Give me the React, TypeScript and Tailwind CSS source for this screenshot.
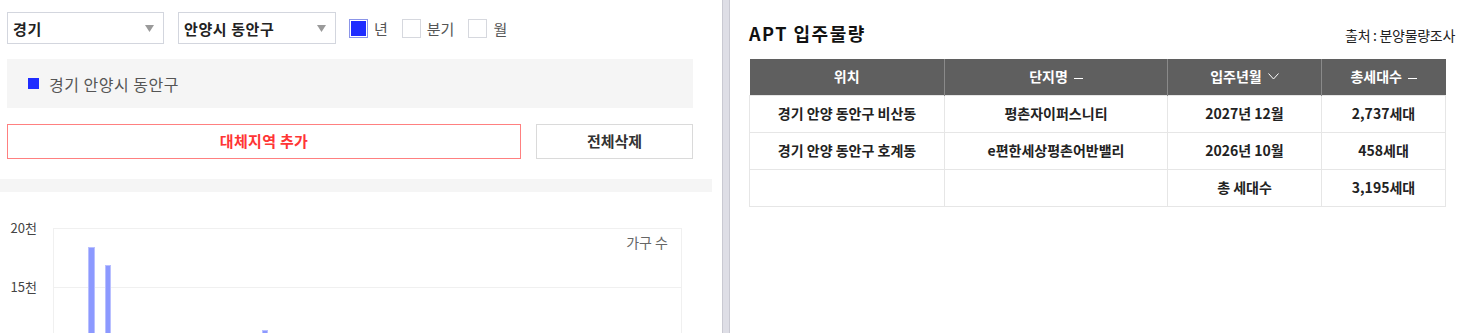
import React from "react";

const rows = [
  { loc: "경기 안양 동안구 비산동", name: "평촌자이퍼스니티", date: "2027년 12월", count: "2,737세대" },
  { loc: "경기 안양 동안구 호계동", name: "e편한세상평촌어반밸리", date: "2026년 10월", count: "458세대" },
];

function Select({ label, width }: { label: string; width: string }) {
  return (
    <div className={`${width} h-[32px] border border-[#d3d6de] flex items-center justify-between pl-[5px] pr-[9px]`}>
      <span className="text-[15px] font-bold text-[#222] leading-none tracking-[0.6px]">{label}</span>
      <svg width="9" height="7" viewBox="0 0 9 7">
        <path d="M0 0 L9 0 L4.5 7 Z" fill="#9a9a9a" />
      </svg>
    </div>
  );
}

function Check({ label, checked }: { label: string; checked?: boolean }) {
  return (
    <div className="flex items-center gap-[6px]">
      <div
        className={`w-[19px] h-[19px] border flex items-center justify-center bg-white ${
          checked ? "border-[#8b95e8]" : "border-[#d6d8de]"
        }`}
      >
        {checked && <div className="w-[15px] h-[15px] bg-[#1e2cff]" />}
      </div>
      <span className="text-[15px] text-[#555] leading-none">{label}</span>
    </div>
  );
}

function Dash() {
  return <span className="inline-block w-[9px] h-[1.5px] bg-white ml-[6px] align-middle" />;
}

function Chart() {
  return (
    <svg width="712" height="141" viewBox="0 192 712 141" className="block">
      <line x1="53" y1="228.5" x2="681" y2="228.5" stroke="#f0f0f0" />
      <line x1="53" y1="287.5" x2="681" y2="287.5" stroke="#f0f0f0" />
      <line x1="53.5" y1="228" x2="53.5" y2="340" stroke="#f0f0f0" />
      <line x1="681.5" y1="228" x2="681.5" y2="340" stroke="#f0f0f0" />
      <text x="37" y="233" textAnchor="end" fontSize="13" fill="#444">20천</text>
      <text x="37" y="292" textAnchor="end" fontSize="13" fill="#444">15천</text>
      <text x="668" y="248" textAnchor="end" fontSize="14" fill="#666">가구 수</text>
      <rect x="88.5" y="247.5" width="6" height="100" fill="#8c99ff" stroke="#b9c0ff" />
      <rect x="105.5" y="265.5" width="5" height="100" fill="#8c99ff" stroke="#b9c0ff" />
      <rect x="262.5" y="330.5" width="5" height="100" fill="#8c99ff" stroke="#b9c0ff" />
    </svg>
  );
}

export default function App() {
  return (
    <div className="flex w-[1466px] h-[333px] overflow-hidden bg-white font-['Noto_Sans_CJK_KR','Noto_Sans',sans-serif]">
      <div className="w-[722px] shrink-0">
        <div className="flex items-center pt-[12px] pl-[7px]">
          <Select label="경기" width="w-[157px]" />
          <div className="ml-[14px]">
            <Select label="안양시 동안구" width="w-[158px]" />
          </div>
          <div className="ml-[13px] flex items-center gap-[14px]">
            <Check label="년" checked />
            <Check label="분기" />
            <Check label="월" />
          </div>
        </div>
        <div className="mt-[15px] ml-[7px] w-[686px] h-[49px] bg-[#f5f5f5] flex items-center pl-[21px] gap-[10px]">
          <div className="w-[11px] h-[11px] bg-[#1e2cff]" />
          <span className="text-[16px] text-[#555] leading-none tracking-[0.5px]">경기 안양시 동안구</span>
        </div>
        <div className="mt-[16px] ml-[7px] flex gap-[15px]">
          <button className="w-[514px] h-[35px] border border-[#ff8080] text-[15px] font-bold text-[#ff3535] tracking-[0.3px]">
            대체지역 추가
          </button>
          <button className="w-[157px] h-[35px] border border-[#dadada] text-[15px] font-bold text-[#333]">
            전체삭제
          </button>
        </div>
        <div className="mt-[20px] w-[712px] h-[13px] bg-[#f5f5f5]" />
        <Chart />
      </div>
      <div className="w-[8px] shrink-0 h-full bg-[#dedee6] border-x border-[#c9c9d2]" />
      <div className="flex-1 pl-[19px] pr-[11px]">
        <div className="flex items-end justify-between h-[43px] pb-[1px]">
          <span className="text-[18px] font-bold text-[#111] leading-none tracking-[1.5px]">APT 입주물량</span>
          <span className="text-[14px] text-[#222] leading-none tracking-[-0.3px]">출처 : 분양물량조사</span>
        </div>
        <table className="mt-[16px] w-[697px] border-collapse text-[14px] text-[#222]">
          <thead>
            <tr className="bg-[#5f5f5f] text-white h-[36px]">
              <th className="w-[195px] font-bold border-r border-[#8a8a8a]">위치</th>
              <th className="w-[223px] font-bold border-r border-[#8a8a8a]">
                단지명
                <Dash />
              </th>
              <th className="w-[154px] font-bold border-r border-[#8a8a8a]">
                <span className="inline-flex items-center gap-[6px]">
                  입주년월
                  <svg width="11" height="7" viewBox="0 0 11 7">
                    <path d="M0.5 0.5 L5.5 6 L10.5 0.5" fill="none" stroke="#fff" strokeWidth="1" />
                  </svg>
                </span>
              </th>
              <th className="font-bold">
                총세대수
                <Dash />
              </th>
            </tr>
          </thead>
          <tbody>
            {rows.map((r) => (
              <tr key={r.loc} className="h-[37px]">
                <td className="border border-[#e6e6e6] text-center font-semibold">{r.loc}</td>
                <td className="border border-[#e6e6e6] text-center font-semibold">{r.name}</td>
                <td className="border border-[#e6e6e6] text-center font-semibold">{r.date}</td>
                <td className="border border-[#e6e6e6] text-center font-semibold">{r.count}</td>
              </tr>
            ))}
            <tr className="h-[37px]">
              <td className="border border-[#e6e6e6]" />
              <td className="border border-[#e6e6e6]" />
              <td className="border border-[#e6e6e6] text-center font-semibold">총 세대수</td>
              <td className="border border-[#e6e6e6] text-center font-semibold">3,195세대</td>
            </tr>
          </tbody>
        </table>
      </div>
    </div>
  );
}
